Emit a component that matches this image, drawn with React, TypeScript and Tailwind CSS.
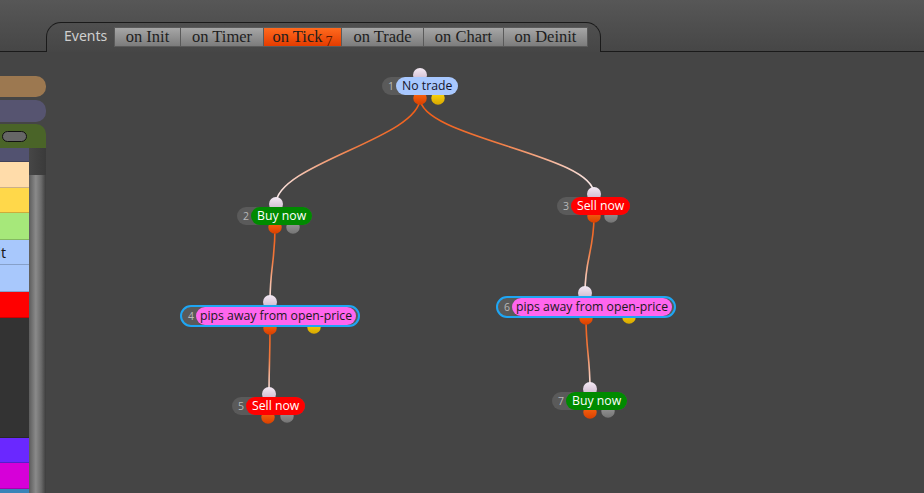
import React from "react";

type Pt = [number, number];

type FlowNode = {
  n: number;
  x: number;
  y: number;
  label: string;
  labelClass: string;
  outline?: boolean;
  top: Pt;
  out: Pt;
  aux: Pt;
  auxColor: "yellow" | "gray";
};

// canvas origin on the page (sidebar width, header height)
const OX = 46;
const OY = 52;

const NODES: FlowNode[] = [
  { n: 1, x: 382, y: 77, label: "No trade", labelClass: "bg-[#a8c8ff] text-[#15152a]", top: [420, 75], out: [420, 98], aux: [438, 98], auxColor: "yellow" },
  { n: 2, x: 237, y: 207, label: "Buy now", labelClass: "bg-[#008a00] text-white", top: [276, 204], out: [275, 227], aux: [293, 227], auxColor: "gray" },
  { n: 3, x: 557, y: 197, label: "Sell now", labelClass: "bg-[#ff0000] text-white", top: [594, 194], out: [594, 216], aux: [611, 216], auxColor: "gray" },
  { n: 4, x: 180, y: 305, label: "pips away from open-price", labelClass: "bg-[#ff66ee] text-[#1a1a1a]", outline: true, top: [270, 302], out: [270, 328], aux: [314, 327], auxColor: "yellow" },
  { n: 5, x: 232, y: 397, label: "Sell now", labelClass: "bg-[#ff0000] text-white", top: [269, 394], out: [268, 417], aux: [287, 416], auxColor: "gray" },
  { n: 6, x: 496, y: 296, label: "pips away from open-price", labelClass: "bg-[#ff66ee] text-[#1a1a1a]", outline: true, top: [585, 293], out: [586, 318], aux: [629, 317], auxColor: "yellow" },
  { n: 7, x: 552, y: 392, label: "Buy now", labelClass: "bg-[#008a00] text-white", top: [590, 389], out: [590, 412], aux: [608, 411], auxColor: "gray" },
];

const EDGES: [number, number][] = [
  [1, 2],
  [1, 3],
  [2, 4],
  [3, 6],
  [4, 5],
  [6, 7],
];

const TABS = [
  { label: "on Init", w: "w-[67px]" },
  { label: "on Timer", w: "w-[83px]" },
  { label: "on Tick", w: "w-[78px]", active: true, count: 7 },
  { label: "on Trade", w: "w-[82px]" },
  { label: "on Chart", w: "w-[80px]" },
  { label: "on Deinit", w: "w-[84px]" },
];

const ROWS = [
  { h: "h-[14px]", bg: "bg-[#525270]" },
  { h: "h-[26px]", bg: "bg-[#ffdcaa]" },
  { h: "h-[25px]", bg: "bg-[#ffd84a]" },
  { h: "h-[27px]", bg: "bg-[#a6e87a]" },
  { h: "h-[25px]", bg: "bg-[#a8c8fc]", text: "Buy limit" },
  { h: "h-[27px]", bg: "bg-[#a8c8fc]" },
  { h: "h-[26px]", bg: "bg-[#ff0000]" },
  { h: "h-[120px]", bg: "bg-[#333333]" },
  { h: "h-[25px]", bg: "bg-[#6a28ff]" },
  { h: "h-[26px]", bg: "bg-[#d600d8]" },
  { h: "h-[30px]", bg: "bg-[#3a84b8]" },
];

function edgePath(a: Pt, b: Pt) {
  const k = Math.min(40, (b[1] - a[1]) * 0.45);
  return `M${a[0]} ${a[1]} C${a[0]} ${a[1] + k} ${b[0]} ${b[1] - k} ${b[0]} ${b[1]}`;
}

function Header() {
  return (
    <div className="flex h-[52px] items-end bg-[linear-gradient(to_bottom,#575757,#464646)]">
      <div className="h-full w-[46px] border-b border-[#1a1a1a]" />
      <div className="flex h-[30px] w-[555px] items-start rounded-t-[15px] border border-b-0 border-[#1a1a1a] pl-[17px] pt-[4px]">
        <span className="w-[50px] font-['Noto_Sans',sans-serif] text-[14px] leading-[18px] text-[#cfcfcf]">Events</span>
        <div className="flex">
          {TABS.map((t, i) => (
            <div
              key={t.label}
              className={`flex h-[20px] ${t.w} items-center justify-center border-y border-r border-[#5a5a5a] ${i === 0 ? "border-l" : ""} ${
                t.active
                  ? "bg-[linear-gradient(to_bottom,#ff6a1e,#e43c00)]"
                  : "bg-[linear-gradient(to_bottom,#a6a6a6,#7c7c7c)]"
              } font-['Liberation_Serif',serif] text-[16.5px] leading-none text-[#1e1e1e]`}
            >
              {t.label}
              {t.count && <span className="relative top-[5px] ml-[3px] text-[14px] text-[#5a1800]">{t.count}</span>}
            </div>
          ))}
        </div>
      </div>
      <div className="h-full flex-1 border-b border-[#1a1a1a]" />
    </div>
  );
}

function Sidebar() {
  return (
    <aside className="flex w-[46px] flex-col overflow-hidden pt-[24px]">
      <div className="h-[21px] rounded-r-[10px] bg-[#9c7850]" />
      <div className="mt-[3px] h-[22px] rounded-r-[10px] bg-[#565470]" />
      <div className="mt-[2px] flex h-[24px] items-center rounded-tr-[10px] bg-[#4a6428] pl-[2px]">
        <div className="h-[11px] w-[25px] rounded-full border border-[#111] bg-[#666]" />
      </div>
      <div className="flex flex-1 overflow-hidden">
        <div className="flex w-[29px] flex-col">
          {ROWS.map((r, i) => (
            <div
              key={i}
              className={`${r.h} ${r.bg} flex shrink-0 items-center justify-end overflow-hidden whitespace-nowrap border-b border-black/20 pr-[23px] font-['Noto_Sans',sans-serif] text-[14px] text-[#1a1a1a]`}
            >
              {r.text}
            </div>
          ))}
        </div>
        <div className="flex w-[17px] flex-col">
          <div className="h-[27px] bg-[linear-gradient(to_right,#464646,#3a3a3a)]" />
          <div className="flex-1 bg-[linear-gradient(to_right,#5c5c5c,#8a8a8a_40%,#6a6a6a_72%,#3c3c3c)]" />
        </div>
      </div>
    </aside>
  );
}

function Canvas() {
  const byId = (n: number) => NODES.find((d) => d.n === n)!;
  return (
    <div className="relative flex-1 overflow-hidden">
      <svg className="absolute left-0 top-0" width={878} height={441} viewBox={`${OX} ${OY} 878 441`}>
        <defs>
          {EDGES.map(([a, b], i) => {
            const s = byId(a).out;
            const e = byId(b).top;
            return (
              <linearGradient key={i} id={`edge${i}`} gradientUnits="userSpaceOnUse" x1={s[0]} y1={s[1]} x2={e[0]} y2={e[1]}>
                <stop offset="0" stopColor="#f25a12" />
                <stop offset="0.45" stopColor="#f07a40" />
                <stop offset="1" stopColor="#fbeef0" />
              </linearGradient>
            );
          })}
          <linearGradient id="cTop" x1="0" y1="0" x2="0" y2="1">
            <stop offset="0" stopColor="#f4eaf4" />
            <stop offset="1" stopColor="#c9b2c9" />
          </linearGradient>
          <linearGradient id="cOut" x1="0" y1="0" x2="0" y2="1">
            <stop offset="0" stopColor="#ff6a14" />
            <stop offset="1" stopColor="#d84000" />
          </linearGradient>
          <linearGradient id="cYellow" x1="0" y1="0" x2="0" y2="1">
            <stop offset="0" stopColor="#ffdc10" />
            <stop offset="1" stopColor="#d8a800" />
          </linearGradient>
          <linearGradient id="cGray" x1="0" y1="0" x2="0" y2="1">
            <stop offset="0" stopColor="#a0a0a0" />
            <stop offset="1" stopColor="#747474" />
          </linearGradient>
        </defs>
        {EDGES.map(([a, b], i) => (
          <path key={i} d={edgePath(byId(a).out, byId(b).top)} fill="none" stroke={`url(#edge${i})`} strokeWidth={1.6} />
        ))}
        {NODES.map((d) => (
          <g key={d.n}>
            <circle cx={d.top[0]} cy={d.top[1]} r={7} fill="url(#cTop)" />
            <circle cx={d.aux[0]} cy={d.aux[1]} r={6.75} fill={d.auxColor === "yellow" ? "url(#cYellow)" : "url(#cGray)"} />
            <circle cx={d.out[0]} cy={d.out[1]} r={6.75} fill="url(#cOut)" />
          </g>
        ))}
      </svg>
      {NODES.map((d) => (
        <div
          key={d.n}
          className={`absolute flex items-center rounded-full bg-[#5a5a5a] pl-[6px] ${d.outline ? "h-[22px] border-2 border-[#1ea6f4] pl-[4px] pr-[2px]" : "h-[18px]"}`}
          style={{ left: d.x - OX, top: d.y - OY }}
        >
          <span className="w-[6px] font-['Open_Sans',sans-serif] text-[10.5px] leading-none text-[#b8b8b8]">{d.n}</span>
          <span
            className={`ml-[2px] flex h-[18px] items-center whitespace-nowrap rounded-full font-['Open_Sans',sans-serif] text-[12.25px] leading-none ${d.outline ? "px-[4px]" : "px-[6px]"} ${d.labelClass}`}
          >
            {d.label}
          </span>
        </div>
      ))}
    </div>
  );
}

export default function App() {
  return (
    <div className="flex h-[493px] w-[924px] flex-col overflow-hidden bg-[#454545]">
      <Header />
      <div className="flex flex-1 overflow-hidden">
        <Sidebar />
        <Canvas />
      </div>
    </div>
  );
}
